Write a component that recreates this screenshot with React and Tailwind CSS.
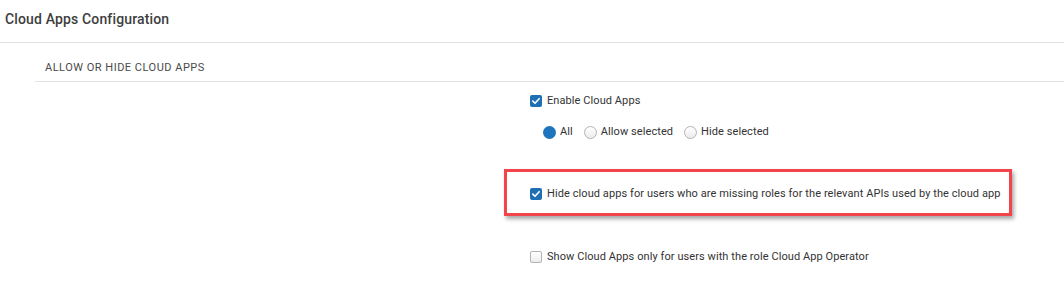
import React from "react";

const CheckBox = ({ checked }) =>
  checked ? (
    <span className="flex h-[12px] w-[12px] shrink-0 items-center justify-center rounded-[2px] bg-[#1f6fb4]">
      <svg viewBox="0 0 12 12" className="h-[10px] w-[10px]">
        <path d="M2.2 6.2 L4.8 8.7 L9.8 3.3" fill="none" stroke="#fff" strokeWidth="2" strokeLinecap="round" strokeLinejoin="round" />
      </svg>
    </span>
  ) : (
    <span className="h-[12px] w-[12px] shrink-0 rounded-[2px] border border-[#b3b3b3] bg-gradient-to-b from-white to-[#ececec]" />
  );

const Radio = ({ checked, label }) => (
  <label className="flex items-center gap-[4px]">
    {checked ? (
      <span className="h-[13px] w-[13px] rounded-full bg-[#1e75bd]" />
    ) : (
      <span className="h-[13px] w-[13px] rounded-full border border-[#b3b3b3] bg-gradient-to-b from-white to-[#ececec]" />
    )}
    <span>{label}</span>
  </label>
);

const Option = ({ checked, children }) => (
  <label className="flex h-[16px] items-center gap-[5px]">
    <CheckBox checked={checked} />
    <span>{children}</span>
  </label>
);

export default function App() {
  return (
    <div className="h-[286px] w-[1064px] bg-white font-['Roboto',sans-serif] text-[#333]">
      {/* Header */}
      <div className="h-[43px] border-b border-[#e2e2e2] pl-[5px] pt-[9px]">
        <h1 className="text-[14px] font-medium leading-[21px] tracking-[0.15px] text-[#3e3e3e]">Cloud Apps Configuration</h1>
      </div>

      <div className="ml-[35px]">
        {/* Section title */}
        <div className="h-[39px] border-b border-[#e2e2e2] pl-[10px] pt-[18px]">
          <h2 className="text-[11px] uppercase leading-[14px] tracking-[0.5px] text-[#4a4a4a]">Allow or hide cloud apps</h2>
        </div>

        <div className="pl-[495px] text-[11px] leading-[16px] tracking-[0.08px]">
          <div className="mt-[11px]">
            <Option checked>Enable Cloud Apps</Option>
          </div>

          <div className="mt-[15px] flex h-[16px] items-center gap-[11px] pl-[13px]">
            <Radio checked label="All" />
            <Radio label="Allow selected" />
            <Radio label="Hide selected" />
          </div>

          <div className="-ml-[26px] mt-[29px] w-[508px] border-[3px] border-[#f2444a] pb-[11px] pl-[23px] pt-[14px] shadow-[2px_3px_4px_rgba(0,0,0,0.35)]">
            <Option checked>Hide cloud apps for users who are missing roles for the relevant APIs used by the cloud app</Option>
          </div>

          <div className="mt-[33px]">
            <Option>Show Cloud Apps only for users with the role Cloud App Operator</Option>
          </div>
        </div>
      </div>
    </div>
  );
}
